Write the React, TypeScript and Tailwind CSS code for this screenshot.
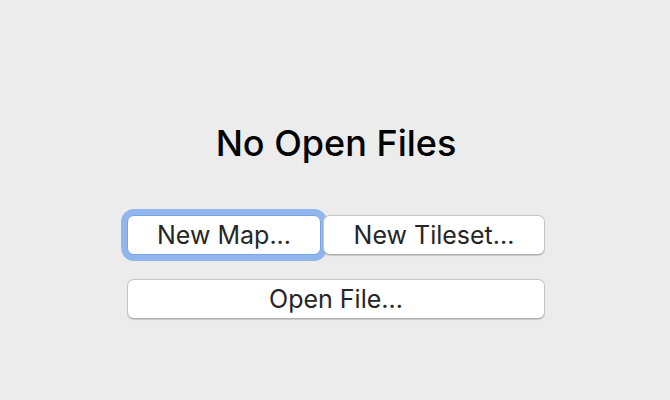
export default function App() {
  const button =
    "h-10 rounded-[7px] border border-[#c6c6c6] border-b-[#b0b0b0] bg-white text-[25px] leading-9 text-[#262626] shadow-[0_1px_1px_rgba(0,0,0,0.16)] outline-none";
  return (
    <main className="flex min-h-screen flex-col items-center justify-center bg-[#ececec] pt-[38px] pr-4 pl-[18px] font-['Inter',sans-serif]">
      <h1 className="text-[36px] leading-12 font-medium text-black">No Open Files</h1>
      <div className="mt-12 grid w-full max-w-[418px] grid-cols-[194fr_222fr] gap-x-[2px] gap-y-6">
        <button
          type="button"
          autoFocus
          className={`${button} focus:border-[#78a5e6] focus:shadow-none focus:ring-6 focus:ring-[#90b6ed]`}
        >
          New Map...
        </button>
        <button type="button" className={`${button} relative`}>
          New Tileset...
        </button>
        <button type="button" className={`${button} col-span-2`}>
          Open File...
        </button>
      </div>
    </main>
  );
}
